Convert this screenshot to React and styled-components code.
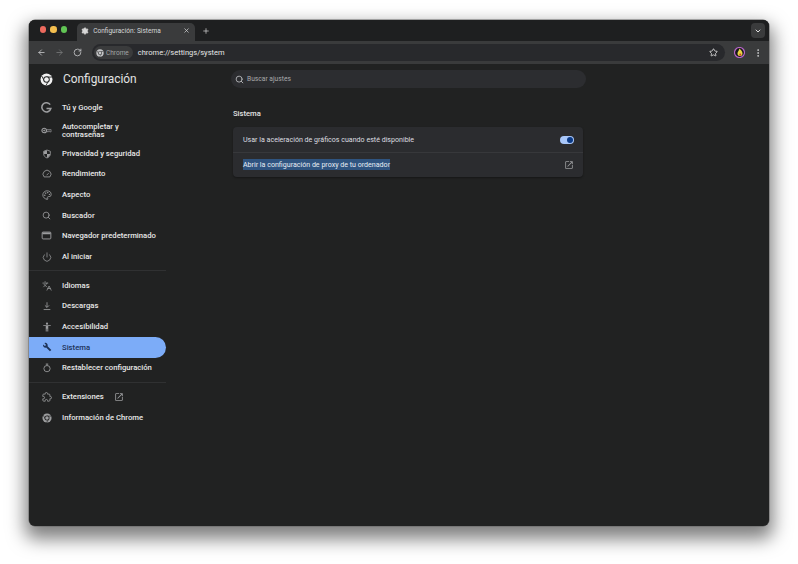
import styled, { createGlobalStyle } from "styled-components";
import {
  ArrowLeft,
  ArrowRight,
  RotateCw,
  Star,
  EllipsisVertical,
  ChevronDown,
  X,
  Plus,
  Search,
  Palette,
  Power,
  Languages,
  Settings,
} from "lucide-react";

const GlobalStyle = createGlobalStyle`
  html, body {
    margin: 0;
    background: #ffffff;
    font-family: Roboto, "Liberation Sans", sans-serif;
  }
  * {
    box-sizing: border-box;
  }
`;

const Page = styled.div`
  width: 798px;
  height: 564px;
  padding: 20px 29px 38px;
  overflow: hidden;
`;

const Window = styled.div`
  height: 506px;
  display: flex;
  flex-direction: column;
  border-radius: 6px;
  overflow: hidden;
  background: #212222;
  box-shadow: 0 0 0 0.5px #666, 0 9px 18px 4px rgba(0, 0, 0, 0.5);
`;

const TabStrip = styled.div`
  height: 21px;
  flex: none;
  display: flex;
  align-items: flex-end;
  background: #1e1f20;
  padding: 0 4px 0 11px;
`;

const Lights = styled.div`
  display: flex;
  gap: 4px;
  height: 100%;
  align-items: center;
  padding-bottom: 2px;
  margin-right: 10px;
`;

const Light = styled.span`
  width: 6.4px;
  height: 6.4px;
  border-radius: 50%;
  background: ${(p) => p.$color};
`;

const Tab = styled.div`
  width: 118px;
  height: 18px;
  display: flex;
  align-items: center;
  gap: 4px;
  padding: 0 5px 3px 4px;
  background: #3a3b3c;
  border-radius: 5px 5px 0 0;
  color: #d6d7d8;
  font-size: 6.55px;
  svg {
    flex: none;
  }
  span {
    flex: 1;
    white-space: nowrap;
  }
`;

const NewTab = styled.div`
  display: flex;
  align-items: center;
  height: 18px;
  padding-bottom: 3px;
  margin-left: 7px;
  color: #d0d0d0;
`;

const TabMenu = styled.div`
  width: 14px;
  height: 15px;
  margin-left: auto;
  align-self: center;
  display: flex;
  align-items: center;
  justify-content: center;
  border-radius: 4px;
  background: #3a3b3c;
  color: #e0e0e0;
`;

const Toolbar = styled.div`
  height: 23px;
  flex: none;
  display: flex;
  align-items: center;
  gap: 3px;
  padding: 0 3px 0 5px;
  background: #3a3b3c;
`;

const NavButton = styled.div`
  width: 14px;
  height: 14px;
  margin-right: 1px;
  display: flex;
  align-items: center;
  justify-content: center;
  color: ${(p) => (p.$off ? "#77787a" : "#c4c5c7")};
`;

const Omnibox = styled.div`
  flex: 1;
  height: 17px;
  margin-left: 4px;
  display: flex;
  align-items: center;
  gap: 5px;
  padding: 0 7px 0 2px;
  border-radius: 9px;
  background: #28292c;
  color: #e6e6e6;
  font-size: 7.5px;
`;

const Chip = styled.div`
  height: 13px;
  display: flex;
  align-items: center;
  gap: 2px;
  padding: 0 4px 0 2px;
  border-radius: 7px;
  background: #3a3b3c;
  color: #a3a4a6;
  font-size: 6.5px;
`;

const Url = styled.span`
  flex: 1;
`;

const Avatar = styled.div`
  width: 11px;
  height: 11px;
  margin: 0 3px 0 6px;
  display: flex;
`;

const Body = styled.div`
  flex: 1;
  display: flex;
`;

const Sidebar = styled.nav`
  width: 137px;
  flex: none;
`;

const Brand = styled.div`
  height: 30px;
  display: flex;
  align-items: center;
  gap: 10px;
  padding-left: 11px;
  color: #e3e3e3;
  font-size: 11.9px;
  margin-bottom: 3.4px;
`;

const Item = styled.div`
  height: ${(p) => (p.$tall ? "25.3px" : "20.6px")};
  display: flex;
  align-items: center;
  gap: 10px;
  padding-left: 12px;
  border-radius: 0 11px 11px 0;
  background: ${(p) => (p.$active ? "#7cacf8" : "transparent")};
  color: ${(p) => (p.$active ? "#1d3358" : "#e8e8e8")};
  font-size: 7.7px;
  font-weight: 500;
  line-height: 7.6px;
  svg {
    flex: none;
    color: ${(p) => (p.$active ? "#1d3358" : "#9c9d9f")};
  }
`;

const ItemLabel = styled.span`
  max-width: 68px;
  white-space: ${(p) => (p.$wrap ? "normal" : "nowrap")};
`;

const Rule = styled.div`
  height: 1px;
  margin: 3.5px 0 4px;
  background: #303132;
`;

const Main = styled.main`
  flex: 1;
  padding: 6px 0 0 65px;
`;

const SearchBar = styled.div`
  width: 355px;
  height: 18px;
  display: flex;
  align-items: center;
  gap: 3px;
  padding-left: 4px;
  border-radius: 9px;
  background: #2c2d30;
  color: #a8a9ab;
  font-size: 6.7px;
  svg {
    color: #c4c5c7;
  }
`;

const Column = styled.div`
  width: 350px;
  margin-left: 2px;
`;

const SectionTitle = styled.h2`
  margin: 20px 0 7px;
  color: #e3e3e3;
  font-size: 7.6px;
  line-height: 12px;
  font-weight: 500;
`;

const Card = styled.section`
  border-radius: 4px;
  background: #2b2c2f;
  box-shadow: 0 1px 2px rgba(0, 0, 0, 0.35);
`;

const Row = styled.div`
  height: 25px;
  display: flex;
  align-items: center;
  justify-content: space-between;
  padding: 0 9px 0 10px;
  color: #dedfe0;
  font-size: 7.08px;
  & + & {
    border-top: 1px solid #37383b;
    padding-bottom: 1px;
  }
  svg {
    color: #9a9b9d;
  }
`;

const Selected = styled.span`
  padding: 1px 0;
  background: #2f5480;
  color: #e8edf3;
`;

const Toggle = styled.div`
  width: 14px;
  height: 8px;
  display: flex;
  align-items: center;
  justify-content: flex-end;
  padding-right: 1px;
  border-radius: 4px;
  background: #a8c7fa;
  &::after {
    content: "";
    width: 6px;
    height: 6px;
    border-radius: 50%;
    background: #0b3a86;
  }
`;

const IconSlot = styled.span`
  width: 11px;
  flex: none;
  display: flex;
  justify-content: center;
`;

function ChromeLogo({ size, ring, dot, gap }) {
  return (
    <svg width={size} height={size} viewBox="0 0 24 24">
      <circle cx="12" cy="12" r="11" fill={ring} />
      <path d="M12 7.5h10M7.9 14.2 3 5.2M16 14.4l-5 8.6" stroke={gap} strokeWidth="1.6" />
      <circle cx="12" cy="12" r="6" fill={gap} />
      <circle cx="12" cy="12" r="4.2" fill={dot} />
    </svg>
  );
}

// small menu glyphs drawn to follow the chrome settings set
const Glyph = ({ children, size = 10 }) => (
  <svg width={size} height={size} viewBox="0 0 24 24" fill="none" stroke="currentColor" strokeWidth="2">
    {children}
  </svg>
);

const OpenInNew = ({ size = 10 }) => (
  <svg width={size} height={size} viewBox="0 0 24 24" fill="currentColor">
    <path d="M19 19H5V5h7V3H5a2 2 0 0 0-2 2v14a2 2 0 0 0 2 2h14c1.100 0 2-.9 2-2v-7h-2zM14 3v2h3.600l-9.800 9.800 1.400 1.400L19 6.400V10h2V3z" />
  </svg>
);

const GoogleIcon = () => (
  <Glyph size={11}>
    <path d="M20 5.800A10 10 0 1 0 21.600 14H12" strokeWidth="3.400" />
  </Glyph>
);
const KeyIcon = () => (
  <Glyph size={11}>
    <circle cx="7" cy="12" r="5" strokeWidth="2.400" />
    <path d="M12 10h10v5h-3v-2h-3v2h-2v-2h-2z" strokeWidth="1.400" />
    <circle cx="7" cy="12" r="1.200" fill="currentColor" />
  </Glyph>
);
const ShieldIcon = () => (
  <Glyph>
    <path d="M12 2.500 4 5.500v6c0 5 3.400 8.600 8 10 4.600-1.400 8-5 8-10v-6z" />
    <path d="M12 3v9H4.500v-6zM12 12h7.500c-.4 4-3.300 7.500-7.500 9z" fill="currentColor" stroke="none" />
  </Glyph>
);
const GaugeIcon = () => (
  <Glyph>
    <path d="M5 19a9.500 9.500 0 1 1 14 0z" />
    <path d="m11 15 5-5" />
  </Glyph>
);
const WindowIcon = () => (
  <Glyph size={11}>
    <rect x="2.500" y="4.500" width="19" height="15" rx="2" />
    <path d="M3 7.500h18" strokeWidth="4" />
  </Glyph>
);
const SearchIcon = () => <Search size={9} strokeWidth={2.2} />;
const PaletteIcon = () => <Palette size={10} strokeWidth={2} />;
const PowerIcon = () => <Power size={10} strokeWidth={1.8} />;
const LangIcon = () => <Languages size={10} strokeWidth={1.8} />;
const DownloadIcon = () => (
  <Glyph>
    <path d="M12 3v12M7 10.500l5 5 5-5M4 20.500h16" />
  </Glyph>
);
const PersonIcon = () => (
  <svg width="10" height="10" viewBox="0 0 24 24" fill="currentColor">
    <circle cx="12" cy="4" r="2.600" />
    <path d="M3 7.500h18v2.200h-6V23h-2.200v-7h-1.600v7H9V9.700H3z" />
  </svg>
);
const WrenchIcon = () => (
  <svg width="10" height="10" viewBox="0 0 24 24" fill="currentColor">
    <path d="M7 2a6 6 0 0 1 6.400 8l9 9-3.400 3.400-9-9A6 6 0 0 1 2.600 6L7 9.800 9.800 7 6 3z" />
  </svg>
);
const ResetIcon = () => (
  <Glyph>
    <circle cx="12" cy="13.500" r="7.500" />
    <path d="M9 2.500h6M12 2.500v3.500" />
  </Glyph>
);
const PuzzleIcon = () => (
  <Glyph size={10}>
    <path d="M20.500 11H19V7c0-1.100-.9-2-2-2h-4V3.500a2.500 2.500 0 0 0-5 0V5H4c-1.100 0-2 .9-2 2v3.800h1.500a2.700 2.700 0 0 1 0 5.400H2V20c0 1.100.9 2 2 2h3.800v-1.500a2.700 2.700 0 0 1 5.400 0V22H17c1.100 0 2-.9 2-2v-4h1.500a2.500 2.500 0 0 0 0-5z" />
  </Glyph>
);
const AboutIcon = () => <ChromeLogo size={10} ring="#9c9d9f" dot="#9c9d9f" gap="#212222" />;

const menuTop = [
  { label: "Tú y Google", icon: GoogleIcon },
  { label: "Autocompletar y contraseñas", icon: KeyIcon, tall: true },
  { label: "Privacidad y seguridad", icon: ShieldIcon },
  { label: "Rendimiento", icon: GaugeIcon },
  { label: "Aspecto", icon: PaletteIcon },
  { label: "Buscador", icon: SearchIcon },
  { label: "Navegador predeterminado", icon: WindowIcon },
  { label: "Al iniciar", icon: PowerIcon },
];

const menuMiddle = [
  { label: "Idiomas", icon: LangIcon },
  { label: "Descargas", icon: DownloadIcon },
  { label: "Accesibilidad", icon: PersonIcon },
  { label: "Sistema", icon: WrenchIcon, active: true },
  { label: "Restablecer configuración", icon: ResetIcon },
];

function MenuItem({ label, icon: Icon, tall, active, children }) {
  return (
    <Item $tall={tall} $active={active}>
      <IconSlot>
        <Icon />
      </IconSlot>
      <ItemLabel $wrap={tall}>{label}</ItemLabel>
      {children}
    </Item>
  );
}

export default function App() {
  return (
    <>
      <GlobalStyle />
      <Page>
        <Window>
          <TabStrip>
            <Lights>
              <Light $color="#ec6a5e" />
              <Light $color="#f4bf4f" />
              <Light $color="#61c554" />
            </Lights>
            <Tab>
              <Settings size={8} fill="#d8d8d8" color="#d8d8d8" />
              <span>Configuración: Sistema</span>
              <X size={7} strokeWidth={2.4} />
            </Tab>
            <NewTab>
              <Plus size={8} strokeWidth={2.2} />
            </NewTab>
            <TabMenu>
              <ChevronDown size={8} strokeWidth={3} />
            </TabMenu>
          </TabStrip>
          <Toolbar>
            <NavButton>
              <ArrowLeft size={9} strokeWidth={2.2} />
            </NavButton>
            <NavButton $off>
              <ArrowRight size={9} strokeWidth={2.2} />
            </NavButton>
            <NavButton>
              <RotateCw size={9} strokeWidth={2.2} />
            </NavButton>
            <Omnibox>
              <Chip>
                <ChromeLogo size={8} ring="#c4c5c7" dot="#c4c5c7" gap="#3a3b3c" />
                Chrome
              </Chip>
              <Url>chrome://settings/system</Url>
              <Star size={9} strokeWidth={2.2} color="#e3e3e3" />
            </Omnibox>
            <Avatar>
              <svg width="11" height="11" viewBox="0 0 22 22">
                <circle cx="11" cy="11" r="10" fill="#17171a" stroke="#b565c6" strokeWidth="2.400" />
                <path d="M11 3c3 3 6 6 6 10a5 5 0 0 1-10 0c0-3 3-6 4-10z" fill="#e8d544" />
                <circle cx="12.500" cy="15" r="2" fill="#d8392b" />
              </svg>
            </Avatar>
            <NavButton>
              <EllipsisVertical size={10} strokeWidth={2.4} />
            </NavButton>
          </Toolbar>
          <Body>
            <Sidebar>
              <Brand>
                <ChromeLogo size={13} ring="#f1f1f1" dot="#f1f1f1" gap="#212222" />
                Configuración
              </Brand>
              {menuTop.map((m) => (
                <MenuItem key={m.label} {...m} />
              ))}
              <Rule />
              {menuMiddle.map((m) => (
                <MenuItem key={m.label} {...m} />
              ))}
              <Rule />
              <MenuItem label="Extensiones" icon={PuzzleIcon}>
                <OpenInNew />
              </MenuItem>
              <MenuItem label="Información de Chrome" icon={AboutIcon} />
            </Sidebar>
            <Main>
              <SearchBar>
                <Search size={9} strokeWidth={2.2} />
                Buscar ajustes
              </SearchBar>
              <Column>
                <SectionTitle>Sistema</SectionTitle>
                <Card>
                  <Row>
                    Usar la aceleración de gráficos cuando esté disponible
                    <Toggle />
                  </Row>
                  <Row>
                    <Selected>Abrir la configuración de proxy de tu ordenador</Selected>
                    <OpenInNew />
                  </Row>
                </Card>
              </Column>
            </Main>
          </Body>
        </Window>
      </Page>
    </>
  );
}
